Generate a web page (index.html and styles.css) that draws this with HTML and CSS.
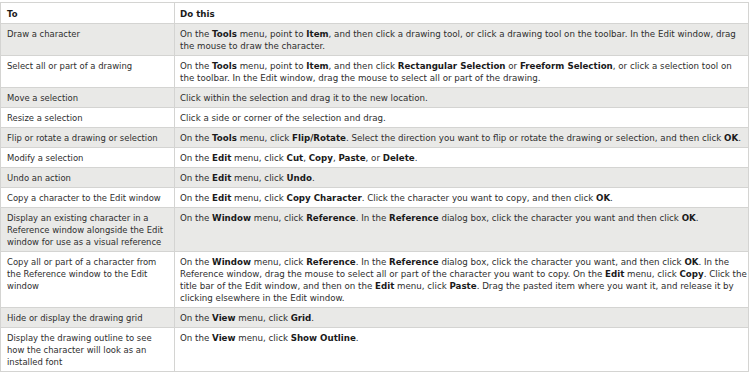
FILE: index.html
```html
<!DOCTYPE html>
<html>
<head>
<meta charset="utf-8">
<link rel="stylesheet" href="styles.css">
</head>
<body>
<table class="ref">
  <colgroup><col class="c1"><col class="c2"></colgroup>
  <thead>
    <tr><th>To</th><th>Do this</th></tr>
  </thead>
  <tbody>
    <tr class="g l2"><td>Draw a character</td><td>On the <b>Tools</b> menu, point to <b>Item</b>, and then click a drawing tool, or click a drawing tool on the toolbar. In the Edit window, drag<br>the mouse to draw the character.</td></tr>
    <tr class="l2"><td>Select all or part of a drawing</td><td>On the <b>Tools</b> menu, point to <b>Item</b>, and then click <b>Rectangular Selection</b> or <b>Freeform Selection</b>, or click a selection tool on<br>the toolbar. In the Edit window, drag the mouse to select all or part of the drawing.</td></tr>
    <tr class="g"><td>Move a selection</td><td>Click within the selection and drag it to the new location.</td></tr>
    <tr><td>Resize a selection</td><td>Click a side or corner of the selection and drag.</td></tr>
    <tr class="g"><td>Flip or rotate a drawing or selection</td><td>On the <b>Tools</b> menu, click <b>Flip/Rotate</b>. Select the direction you want to flip or rotate the drawing or selection, and then click <b>OK</b>.</td></tr>
    <tr><td>Modify a selection</td><td>On the <b>Edit</b> menu, click <b>Cut</b>, <b>Copy</b>, <b>Paste</b>, or <b>Delete</b>.</td></tr>
    <tr class="g"><td>Undo an action</td><td>On the <b>Edit</b> menu, click <b>Undo</b>.</td></tr>
    <tr><td>Copy a character to the Edit window</td><td>On the <b>Edit</b> menu, click <b>Copy Character</b>. Click the character you want to copy, and then click <b>OK</b>.</td></tr>
    <tr class="g"><td>Display an existing character in a<br>Reference window alongside the Edit<br>window for use as a visual reference</td><td>On the <b>Window</b> menu, click <b>Reference</b>. In the <b>Reference</b> dialog box, click the character you want and then click <b>OK</b>.</td></tr>
    <tr><td>Copy all or part of a character from<br>the Reference window to the Edit<br>window</td><td>On the <b>Window</b> menu, click <b>Reference</b>. In the <b>Reference</b> dialog box, click the character you want, and then click <b>OK</b>. In the<br>Reference window, drag the mouse to select all or part of the character you want to copy. On the <b>Edit</b> menu, click <b>Copy</b>. Click the<br>title bar of the Edit window, and then on the <b>Edit</b> menu, click <b>Paste</b>. Drag the pasted item where you want it, and release it by<br>clicking elsewhere in the Edit window.</td></tr>
    <tr class="g"><td>Hide or display the drawing grid</td><td>On the <b>View</b> menu, click <b>Grid</b>.</td></tr>
    <tr><td>Display the drawing outline to see<br>how the character will look as an<br>installed font</td><td>On the <b>View</b> menu, click <b>Show Outline</b>.</td></tr>
  </tbody>
</table>
</body>
</html>
```
FILE: styles.css
```css
html, body {
  margin: 0;
  padding: 0;
  background: #ffffff;
}
body {
  padding-top: 2px;
}
.ref {
  width: 748px;
  border-collapse: collapse;
  font-family: "DejaVu Sans", Verdana, sans-serif;
  font-size: 8.45px;
  line-height: 12px;
  color: #2e2e2e;
  table-layout: fixed;
}
.c1 { width: 174px; }
.c2 { width: 574px; }
.ref th, .ref td {
  border: 1px solid #d4d4d2;
  padding: 4px 2px 3px 6px;
  text-align: left;
  vertical-align: top;
  white-space: nowrap;
  overflow: hidden;
}
.ref th {
  font-weight: bold;
  color: #1a1a1a;
  padding-top: 5px;
  padding-bottom: 3px;
}
.ref td + td, .ref th + th {
  padding-left: 5px;
  font-size: 8.68px;
}
.ref tr.g td { background: #e9e9e7; }
.ref b { font-weight: bold; color: #1a1a1a; }
```
